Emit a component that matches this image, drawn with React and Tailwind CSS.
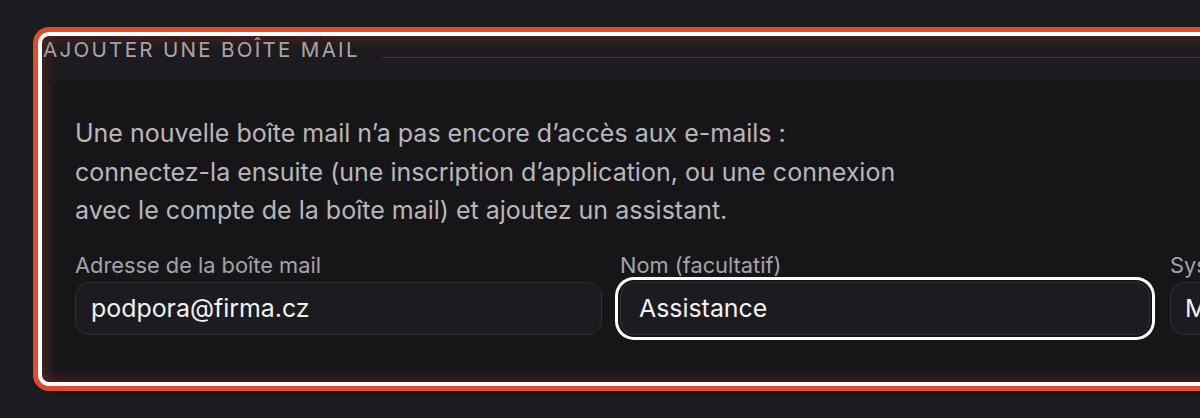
import React from "react";

export default function App() {
  return (
    <div
      className="relative w-[1200px] h-[418px] overflow-hidden bg-[#1c1b1f]"
      style={{ fontFamily: "Inter, 'Noto Sans', sans-serif" }}
    >
      <div className="pl-[43px] pt-[38px]">
        <div className="flex items-end gap-[22px] h-[24px]">
          <span className="text-[20.6px] leading-[24px] tracking-[0.11em] text-[#a9a7ad] whitespace-nowrap">
            AJOUTER UNE BOÎTE MAIL
          </span>
          <div className="flex-1 h-px bg-[#3a3a3e] mb-[4px]" />
        </div>
        <div className="ml-[10px] mt-[18px] rounded-[10px] bg-[#161618] pl-[22px] pt-[34px] pb-[60px] w-[1200px]">
          <p className="text-[25px] leading-[38.6px] text-[#b9b7bc] whitespace-nowrap">
            Une nouvelle boîte mail n’a pas encore d’accès aux e-mails :
            <br />
            connectez-la ensuite (une inscription d’application, ou une connexion
            <br />
            avec le compte de la boîte mail) et ajoutez un assistant.
          </p>
          <div className="mt-[22px] flex gap-[18px]">
            <div className="flex flex-col w-[527px] shrink-0">
              <label className="text-[21.8px] leading-[26px] text-[#a5a3a8] whitespace-nowrap">
                Adresse de la boîte mail
              </label>
              <div className="mt-[4px] h-[53px] rounded-[14px] border border-[#303034] bg-[#1c1b1f] flex items-center pl-[15px] text-[24.9px] text-[#f2f2f3]">
                podpora@firma.cz
              </div>
            </div>
            <div className="flex flex-col w-[530px] shrink-0">
              <label className="text-[21.8px] leading-[26px] text-[#a5a3a8] whitespace-nowrap">
                Nom (facultatif)
              </label>
              <div className="mt-[4px] h-[53px] rounded-[14px] border border-[#303034] bg-[#1c1b1f] flex items-center pl-[18px] text-[24.9px] text-[#f2f2f3] ring-[3px] ring-white ring-offset-[2px] ring-offset-[#161618]">
                Assistance
              </div>
            </div>
            <div className="flex flex-col w-[400px] shrink-0 ml-[2px]">
              <label className="text-[21.8px] leading-[26px] text-[#a5a3a8] whitespace-nowrap">
                Système
              </label>
              <div className="mt-[4px] h-[53px] rounded-[14px] border border-[#303034] bg-[#1c1b1f] flex items-center pl-[14px] text-[24.9px] text-[#f2f2f3] whitespace-nowrap">
                Microsoft 365
              </div>
            </div>
          </div>
        </div>
      </div>
      <div className="absolute left-[33px] top-[27px] w-[1220px] h-[364px] rounded-[16px] border-[5px] border-[#e04b2d] pointer-events-none">
        <div className="w-full h-full rounded-[11px] border-[4px] border-white shadow-[inset_0_0_16px_rgba(190,55,35,0.45)]" />
      </div>
    </div>
  );
}
